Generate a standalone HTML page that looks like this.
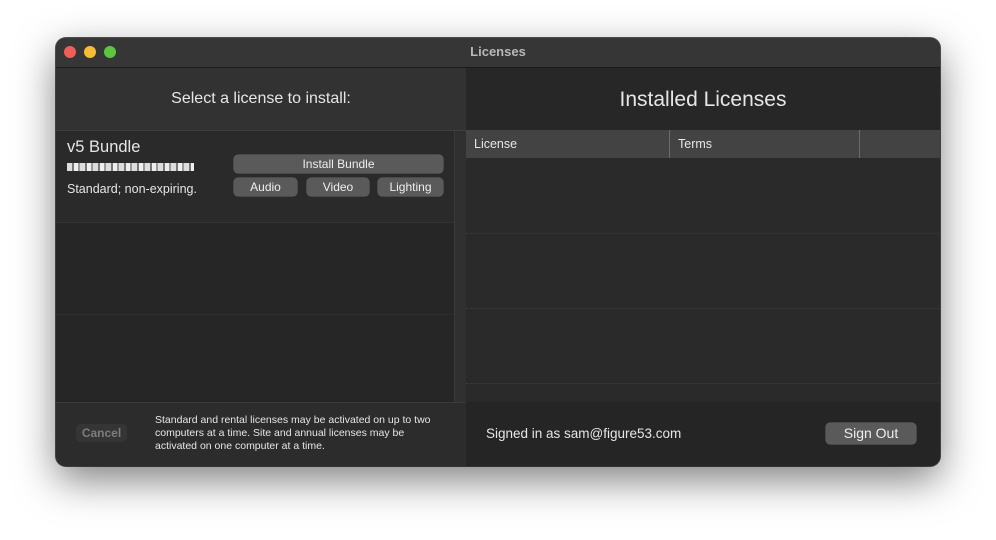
<!DOCTYPE html>
<html><head><style>
body{margin:0;width:996px;height:540px;background:#fff;font-family:"Liberation Sans",sans-serif;position:relative;overflow:hidden}
.win{position:absolute;left:56px;top:38px;width:884px;height:428px;border-radius:10px;background:#2a2a2a;overflow:hidden;box-shadow:0 14px 40px rgba(0,0,0,.5),0 0 0 1px #555}
.a{position:absolute}
.t{color:#e6e6e6;white-space:nowrap}
.btn{position:absolute;background:#5a5a5a;border-radius:4px;color:#eee;font-size:12px;text-align:center;box-shadow:0 0 0 .5px #6a6a6a}
</style></head><body>
<div class="win">
 <div class="a" style="left:0;top:0;width:884px;height:29px;background:#363636;border-bottom:1px solid #1c1c1c"></div>
 <div class="a" style="left:8px;top:8px;width:12px;height:12px;border-radius:50%;background:#ee5f57"></div>
 <div class="a" style="left:28px;top:8px;width:12px;height:12px;border-radius:50%;background:#f5bd33"></div>
 <div class="a" style="left:48px;top:8px;width:12px;height:12px;border-radius:50%;background:#5ec540"></div>
 <div class="a t" style="left:0;width:884px;top:6px;text-align:center;font-size:13px;font-weight:bold;color:#b8b8b8">Licenses</div>
 <div class="a" style="left:0;top:30px;width:410px;height:62px;background:#323232;border-bottom:1px solid #3e3e3e"></div>
 <div class="a t" style="left:0;width:410px;top:52px;text-align:center;font-size:16px">Select a license to install:</div>
 <div class="a" style="left:0;top:93px;width:398px;height:91px;background:#2a2a2a;border-bottom:1px solid #333"></div>
 <div class="a" style="left:0;top:185px;width:398px;height:91px;background:#262626;border-bottom:1px solid #2e2e2e"></div>
 <div class="a" style="left:0;top:277px;width:398px;height:87px;background:#262626"></div>
 <div class="a" style="left:398px;top:93px;width:12px;height:271px;background:#303030;border-left:1px solid #3a3a3a"></div>
 <div class="a t" style="left:11px;top:100px;font-size:16.5px">v5 Bundle</div>
 <div class="a" style="left:11px;top:125px;width:127px;height:8px;background:repeating-linear-gradient(90deg,#ddd 0 5px,#777 5px 7px,#eee 7px 11px,#999 11px 13px)"></div>
 <div class="a t" style="left:11px;top:144px;font-size:12.5px">Standard; non-expiring.</div>
 <div class="btn" style="left:178px;top:117px;width:209px;height:18px;line-height:18px">Install Bundle</div>
 <div class="btn" style="left:178px;top:140px;width:63px;height:18px;line-height:18px">Audio</div>
 <div class="btn" style="left:251px;top:140px;width:62px;height:18px;line-height:18px">Video</div>
 <div class="btn" style="left:322px;top:140px;width:65px;height:18px;line-height:18px">Lighting</div>
 <div class="a" style="left:0;top:364px;width:410px;height:64px;background:#2c2c2c;border-top:1px solid #3a3a3a"></div>
 <div class="a" style="left:20px;top:386px;width:51px;height:18px;border-radius:5px;background:#353535;color:#7d7d7d;font-size:12px;font-weight:bold;text-align:center;line-height:18px">Cancel</div>
 <div class="a t" style="left:99px;top:376px;font-size:10.5px;line-height:13px">Standard and rental licenses may be activated on up to two<br>computers at a time. Site and annual licenses may be<br>activated on one computer at a time.</div>
 <div class="a" style="left:410px;top:30px;width:474px;height:62px;background:#272727"></div>
 <div class="a t" style="left:410px;width:474px;top:50px;text-align:center;font-size:21px">Installed Licenses</div>
 <div class="a" style="left:410px;top:92px;width:474px;height:28px;background:#434343"></div>
 <div class="a" style="left:613px;top:92px;width:1px;height:28px;background:#6a6a6a"></div>
 <div class="a" style="left:803px;top:92px;width:1px;height:28px;background:#6a6a6a"></div>
 <div class="a t" style="left:418px;top:99px;font-size:12.5px">License</div>
 <div class="a t" style="left:622px;top:99px;font-size:12.5px">Terms</div>
 <div class="a" style="left:410px;top:120px;width:474px;height:244px;background:#2a2a2a"></div>
 <div class="a" style="left:410px;top:195px;width:474px;border-top:1px dotted #3c3c3c"></div>
 <div class="a" style="left:410px;top:270px;width:474px;border-top:1px dotted #3c3c3c"></div>
 <div class="a" style="left:410px;top:345px;width:474px;border-top:1px dotted #3c3c3c"></div>
 <div class="a" style="left:410px;top:364px;width:474px;height:64px;background:#252525"></div>
 <div class="a t" style="left:430px;top:388px;font-size:13.5px">Signed in as sam@figure53.com</div>
 <div class="btn" style="left:770px;top:385px;width:90px;height:21px;line-height:21px;font-size:14px">Sign Out</div>
</div>
</body></html>
